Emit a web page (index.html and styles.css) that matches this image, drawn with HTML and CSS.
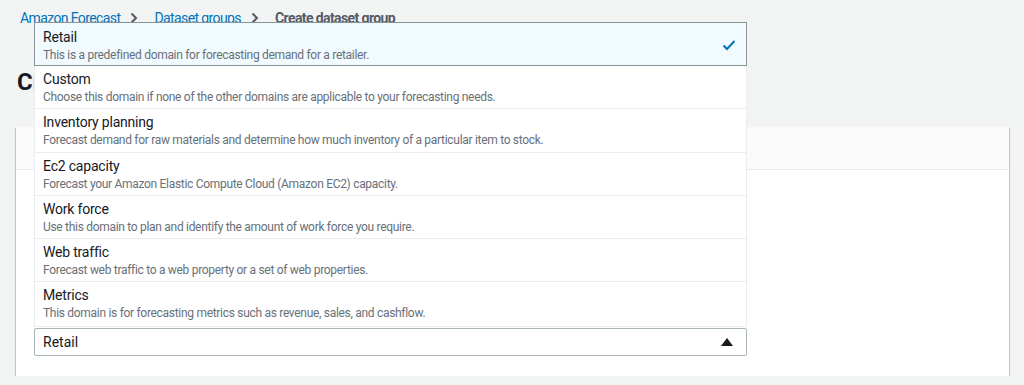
FILE: index.html
```html
<!DOCTYPE html>
<html lang="en">
<head>
    <meta charset="UTF-8">
    <meta name="viewport" content="width=device-width, initial-scale=1.0">
    <title>Create dataset group</title>
    <link rel="stylesheet" href="styles.css">
</head>
<body>

    <nav class="breadcrumbs">
        <a href="#">Amazon Forecast</a>
        <svg class="crumb-sep" width="10" height="12" viewBox="0 0 10 12"><path d="M2.5 1.5 7 6 2.5 10.5" fill="none" stroke="#545b64" stroke-width="2"/></svg>
        <a href="#">Dataset groups</a>
        <svg class="crumb-sep" width="10" height="12" viewBox="0 0 10 12"><path d="M2.5 1.5 7 6 2.5 10.5" fill="none" stroke="#545b64" stroke-width="2"/></svg>
        <span class="current">Create dataset group</span>
    </nav>

    <h1>Create dataset group</h1>

    <div class="card">
        <div class="card-header"></div>
        <div class="card-body">
            <div class="select">
                <ul class="options">
                    <li class="option selected">
                        <div class="opt-text">
                            <div class="opt-title">Retail</div>
                            <div class="opt-desc">This is a predefined domain for forecasting demand for a retailer.</div>
                        </div>
                        <svg class="check" width="16" height="16" viewBox="0 0 16 16"><path d="M2.5 8.5 6 12l7.5-8" fill="none" stroke="#0073bb" stroke-width="2"/></svg>
                    </li>
                    <li class="option">
                        <div class="opt-title">Custom</div>
                        <div class="opt-desc">Choose this domain if none of the other domains are applicable to your forecasting needs.</div>
                    </li>
                    <li class="option tall">
                        <div class="opt-title">Inventory planning</div>
                        <div class="opt-desc">Forecast demand for raw materials and determine how much inventory of a particular item to stock.</div>
                    </li>
                    <li class="option">
                        <div class="opt-title">Ec2 capacity</div>
                        <div class="opt-desc">Forecast your Amazon Elastic Compute Cloud (Amazon EC2) capacity.</div>
                    </li>
                    <li class="option">
                        <div class="opt-title">Work force</div>
                        <div class="opt-desc">Use this domain to plan and identify the amount of work force you require.</div>
                    </li>
                    <li class="option">
                        <div class="opt-title">Web traffic</div>
                        <div class="opt-desc">Forecast web traffic to a web property or a set of web properties.</div>
                    </li>
                    <li class="option tall last">
                        <div class="opt-title">Metrics</div>
                        <div class="opt-desc">This domain is for forecasting metrics such as revenue, sales, and cashflow.</div>
                    </li>
                </ul>
                <button type="button" class="trigger">
                    <span>Retail</span>
                    <svg width="14" height="14" viewBox="0 0 14 14"><path d="M7 3 13 11H1z" fill="#16191f"/></svg>
                </button>
            </div>
        </div>
    </div>

</body>
</html>
```

FILE: styles.css
```css
body {
    font-family: Roboto, "Liberation Sans", sans-serif;
    background-color: #f2f3f3;
    color: #16191f;
    margin: 0;
    padding: 8px 15px 0 16px;
}
.breadcrumbs {
    display: flex;
    align-items: center;
    margin-left: 4px;
    font-size: 14px;
    line-height: 20px;
    height: 20px;
    letter-spacing: -0.6px;
}
.breadcrumbs a {
    color: #0073bb;
    text-decoration: none;
}
.crumb-sep {
    margin: 0 15px 0 9px;
}
.breadcrumbs .current {
    color: #545b64;
    font-weight: 700;
    letter-spacing: -0.6px;
}
h1 {
    margin: 36px 0 0 1px;
    font-size: 24px;
    line-height: 36px;
    font-weight: 700;
}
.card {
    margin-top: 27px;
    background-color: white;
    box-shadow: 0 1px 1px 0 rgba(0, 28, 36, 0.3), 1px 1px 1px 0 rgba(0, 28, 36, 0.15), -1px 1px 1px 0 rgba(0, 28, 36, 0.15);
}
.card-header {
    height: 42px;
    background-color: #fafafa;
    border-bottom: 1px solid #eaeded;
}
.card-body {
    padding: 158px 18px 20px;
}
.select {
    position: relative;
    width: 713px;
}
.trigger {
    display: flex;
    align-items: center;
    justify-content: space-between;
    width: 100%;
    height: 28px;
    padding: 0 8px 0 8px;
    border: 1px solid #aab7b8;
    border-radius: 2px;
    background-color: white;
    font-family: inherit;
    font-size: 14px;
    color: #16191f;
}
.trigger svg {
    margin-right: 4px;
}
.options {
    position: absolute;
    left: 0;
    right: 0;
    bottom: 100%;
    margin: 0 0 1px;
    padding: 0;
    list-style: none;
    background-color: white;
    border: 1px solid #eaeded;
    border-top: none;
}
.option {
    box-sizing: border-box;
    height: 43px;
    padding: 3px 8px 0 8px;
    border-bottom: 1px solid #eaeded;
}
.option.tall {
    height: 44px;
}
.option.last {
    border-bottom: none;
}
.option.selected {
    display: flex;
    align-items: flex-start;
    justify-content: space-between;
    height: 44px;
    background-color: #f1faff;
    border: 1px solid #879596;
    margin: 0 -1px;
    padding: 4px 8px 0;
}
.check {
    margin: 10px 1px 0 0;
}
.opt-title {
    font-size: 14px;
    line-height: 20px;
    letter-spacing: -0.2px;
}
.opt-desc {
    font-size: 12px;
    line-height: 16px;
    color: #687078;
    letter-spacing: -0.3px;
}
```
